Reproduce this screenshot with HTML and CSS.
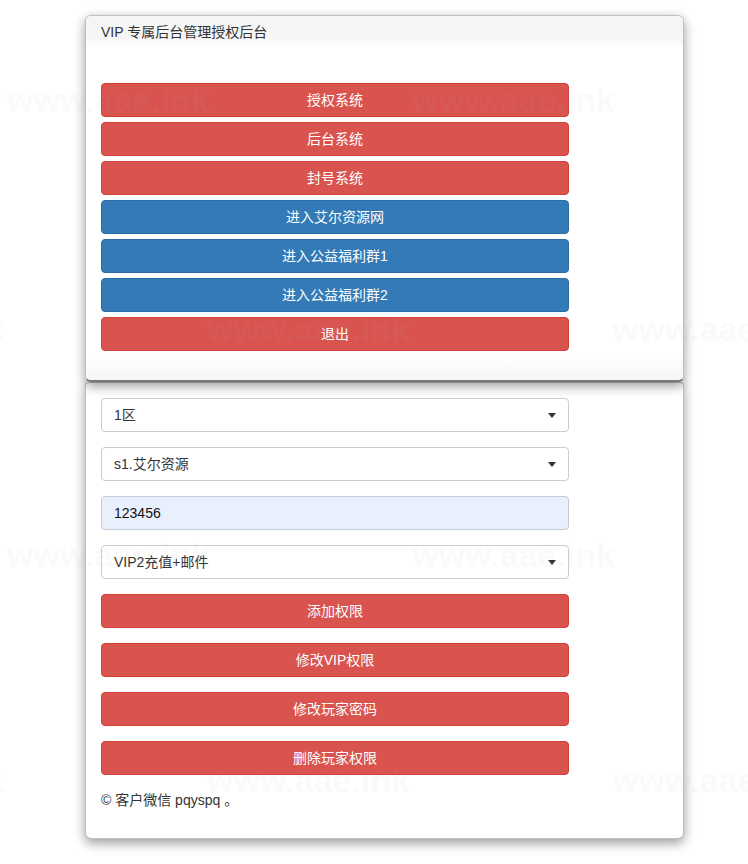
FILE: index.html
```html
<!DOCTYPE html>
<html lang="zh-CN">
<head>
<meta charset="utf-8">
<title>VIP 专属后台管理授权后台</title>
<link rel="stylesheet" href="styles.css">
</head>
<body>
<div class="page">
  <div class="panel panel-top">
    <div class="panel-heading">VIP 专属后台管理授权后台</div>
    <div class="panel-body menu">
      <a class="btn btn-danger">授权系统</a>
      <a class="btn btn-danger">后台系统</a>
      <a class="btn btn-danger">封号系统</a>
      <a class="btn btn-primary">进入艾尔资源网</a>
      <a class="btn btn-primary">进入公益福利群1</a>
      <a class="btn btn-primary">进入公益福利群2</a>
      <a class="btn btn-danger">退出</a>
    </div>
  </div>
  <div class="panel panel-form">
    <div class="form-group select-wrap">
      <select class="form-control"><option>1区</option></select>
    </div>
    <div class="form-group select-wrap">
      <select class="form-control"><option>s1.艾尔资源</option></select>
    </div>
    <div class="form-group">
      <input class="form-control autofill" type="text" value="123456">
    </div>
    <div class="form-group select-wrap">
      <select class="form-control"><option>VIP2充值+邮件</option></select>
    </div>
    <div class="form-group"><a class="btn btn-danger">添加权限</a></div>
    <div class="form-group"><a class="btn btn-danger">修改VIP权限</a></div>
    <div class="form-group"><a class="btn btn-danger">修改玩家密码</a></div>
    <div class="form-group"><a class="btn btn-danger">删除玩家权限</a></div>
    <p class="footer">© 客户微信 pqyspq 。</p>
  </div>
</div>
<div class="watermarks">
  <span class="wm wm-a1">www.aae.ink</span>
  <span class="wm wm-a2">www.aae.ink</span>
  <span class="wm wm-b0">www.aae.ink</span>
  <span class="wm wm-b1">www.aae.ink</span>
  <span class="wm wm-b2">www.aae.ink</span>
  <span class="wm wm-c1">www.aae.ink</span>
  <span class="wm wm-c2">www.aae.ink</span>
  <span class="wm wm-d0">www.aae.ink</span>
  <span class="wm wm-d1">www.aae.ink</span>
  <span class="wm wm-d2">www.aae.ink</span>
</div>
</body>
</html>
```
FILE: styles.css
```css
* { box-sizing: border-box; }
html, body { margin: 0; padding: 0; background: #fff; }
body {
  font-family: "Liberation Sans", Arial, "Noto Sans CJK SC", sans-serif;
  font-size: 14px;
  line-height: 20px;
  color: #333;
  overflow: hidden;
  position: relative;
  width: 748px;
  height: 864px;
}
.page {
  padding: 15px 0 0 85px;
  display: flex;
  flex-direction: column;
  width: 684px;
}
.panel {
  width: 599px;
  background: #fff;
  border: 1px solid rgba(0,0,0,.25);
  border-radius: 6px;
  box-shadow: 0 4px 12px rgba(0,0,0,.4);
}
.panel-top {
  border-bottom: 2px solid #777;
  position: relative;
  z-index: 1;
}
.panel-heading {
  height: 32px;
  padding: 6px 15px;
  background: linear-gradient(to bottom, #f5f5f5 0%, #f6f6f6 70%, #fff 100%);
  border-top-left-radius: 5px;
  border-top-right-radius: 5px;
  color: #333;
}
.panel-body.menu {
  padding: 35px 15px 29px;
  display: flex;
  flex-direction: column;
  gap: 5px;
  background: linear-gradient(to bottom, #fff 0%, #fff 92%, #f6f6f6 100%);
  border-bottom-left-radius: 5px;
  border-bottom-right-radius: 5px;
}
.btn {
  display: block;
  width: 468px;
  height: 34px;
  padding: 6px 12px;
  border: 1px solid transparent;
  border-radius: 4px;
  color: #fff;
  text-align: center;
  font-size: 14px;
  line-height: 20px;
  font-family: "Liberation Sans", Arial, "Noto Sans CJK SC", sans-serif;
}
.btn-danger { background: #d9534f; border-color: #d43f3a; }
.btn-primary { background: #337ab7; border-color: #2e6da4; }
.panel-form {
  padding: 15px 15px 28px;
  border-top-left-radius: 4px;
  border-top-right-radius: 4px;
}
.form-group { margin-bottom: 15px; position: relative; width: 468px; }
.form-group:last-of-type { margin-bottom: 0; }
.form-control {
  display: block;
  width: 468px;
  height: 34px;
  padding: 6px 12px;
  font-size: 14px;
  line-height: 20px;
  color: #333;
  background: #fff;
  border: 1px solid #ccc;
  border-radius: 4px;
  font-family: "Liberation Sans", Arial, "Noto Sans CJK SC", sans-serif;
  -webkit-appearance: none;
  appearance: none;
  outline: none;
  margin: 0;
}
.autofill { background: #e8f0fe; border-color: #c5ccd6; color: #111; }
.select-wrap::after {
  content: "";
  position: absolute;
  right: 13px;
  top: 15px;
  border-left: 4px solid transparent;
  border-right: 4px solid transparent;
  border-top: 5px solid #333;
  pointer-events: none;
}
.footer { margin: 15px 0 0; line-height: 20px; color: #333; }
.watermarks { position: absolute; inset: 0; pointer-events: none; z-index: 5; }
.wm {
  position: absolute;
  font-family: "Liberation Sans", Arial, sans-serif;
  font-weight: bold;
  font-size: 34px;
  line-height: 36px;
  color: rgba(170,185,185,.08);
  white-space: nowrap;
}
.wm-a1 { left: 7px; top: 82px; }
.wm-a2 { left: 412px; top: 82px; }
.wm-b0 { left: -198px; top: 311px; }
.wm-b1 { left: 207px; top: 311px; }
.wm-b2 { left: 612px; top: 311px; }
.wm-c1 { left: 7px; top: 537px; }
.wm-c2 { left: 412px; top: 537px; }
.wm-d0 { left: -198px; top: 762px; }
.wm-d1 { left: 207px; top: 762px; }
.wm-d2 { left: 612px; top: 762px; }
```
